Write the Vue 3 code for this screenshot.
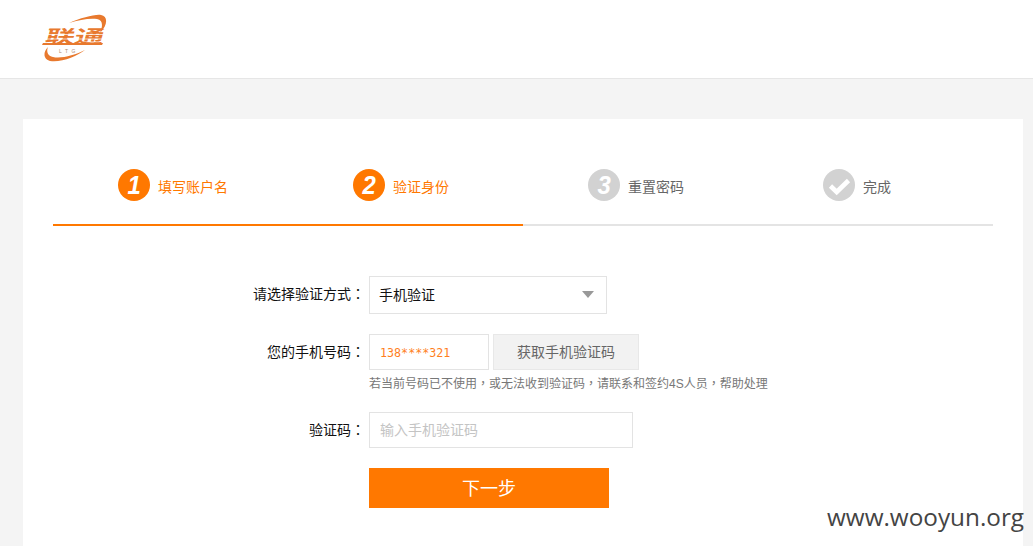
<script setup>
const steps = [
  { num: '1', label: '填写账户名', active: true },
  { num: '2', label: '验证身份', active: true },
  { num: '3', label: '重置密码', active: false },
  { num: '', label: '完成', active: false },
];
</script>

<template>
  <div class="page">
    <header class="top">
      <svg class="logo" width="66" height="50" viewBox="0 0 66 50">
        <path d="M28 9 C40 4 54 0 60 1 C67 2 67 11 59 19 C62 12 62 6 56 5 C48 4 38 6 28 9 Z" fill="#e8792e" />
        <path d="M7 33 C2 38 2 45 9 47 C20 49 36 42 44 36 C34 41 20 45 12 43 C7 42 5 38 7 33 Z" fill="#e8792e" />
        <text class="logo-cn" transform="translate(3 29) scale(1.62 1) skewX(-10)">联通</text>
        <path d="M4 20.5 H64 M2 25 H62" stroke="#fff" stroke-width="0.7" />
        <path d="M2 29 H62 L61 31 H1 Z" fill="#e8792e" />
        <text x="18" y="39" class="logo-en">LTG</text>
      </svg>
    </header>

    <main class="card">
      <div class="steps">
        <div v-for="(s, i) in steps" :key="i" class="step" :class="{ on: s.active }">
          <span class="circle">
            <i v-if="s.num">{{ s.num }}</i>
            <svg v-else width="32" height="32" viewBox="0 0 32 32">
              <path d="M7.5 17 L13.7 23 L25.5 11.5" fill="none" stroke="#fff" stroke-width="4.6" />
            </svg>
          </span>
          <span class="step-label">{{ s.label }}</span>
        </div>
      </div>

      <form class="form" @submit.prevent>
        <div class="row row-select">
          <label>请选择验证方式：</label>
          <div class="select">
            <span>手机验证</span>
            <b class="arrow"></b>
          </div>
        </div>

        <div class="row row-phone">
          <label>您的手机号码：</label>
          <div class="phone">138****321</div>
          <div class="get-code">获取手机验证码</div>
        </div>
        <p class="hint">若当前号码已不使用，或无法收到验证码，请联系和签约4S人员，帮助处理</p>

        <div class="row row-code">
          <label>验证码：</label>
          <input class="code" type="text" placeholder="输入手机验证码" />
        </div>

        <button class="next" type="button">下一步</button>
      </form>
    </main>

    <div class="mark">www.wooyun.org</div>
  </div>
</template>

<style>
html, body {
  margin: 0;
  background: #f4f4f4;
}
</style>

<style scoped>
.page {
  position: relative;
  height: 546px;
  overflow: hidden;
  background: #f4f4f4;
  font-family: "Liberation Sans", "Noto Sans CJK SC", sans-serif;
  color: #333;
}

.top {
  height: 64px;
  background: #fff;
  border-bottom: 1px solid #e6e6e6;
  padding: 14px 0 0 41px;
}

.logo {
  display: block;
}

.logo-cn {
  font-family: "Noto Sans CJK SC", sans-serif;
  font-size: 18px;
  font-weight: 700;
  fill: #e8792e;
}

.logo-en {
  font-family: "Liberation Sans", sans-serif;
  font-size: 5px;
  letter-spacing: 3.5px;
  fill: #b08a70;
}

.card {
  margin: 40px 10px 0 23px;
  height: 427px;
  background: #fff;
  padding: 0 30px;
}

.steps {
  display: flex;
  height: 107px;
  box-sizing: border-box;
  padding-top: 50px;
  border-bottom: 2px solid #e4e4e4;
  position: relative;
}

.steps::after {
  content: "";
  position: absolute;
  left: 0;
  bottom: -2px;
  width: 470px;
  height: 2px;
  background: #ff7800;
}

.step {
  width: 235px;
  padding-left: 65px;
  box-sizing: border-box;
  display: flex;
  align-items: flex-start;
  gap: 8px;
  color: #666;
  font-size: 14px;
}

.step.on {
  color: #ff7800;
}

.circle {
  width: 32px;
  height: 32px;
  border-radius: 50%;
  background: #d2d2d2;
  color: #fff;
  display: flex;
  align-items: center;
  justify-content: center;
  font-size: 26px;
  font-weight: 700;
  flex: none;
}

.on .circle {
  background: #ff7800;
}

.circle i {
  font-style: italic;
  transform: scaleX(0.92);
}

.circle svg {
  display: block;
}

.step-label {
  line-height: 36px;
}

.form {
  padding-top: 50px;
  font-size: 14px;
}

.row {
  display: flex;
  align-items: center;
}

.row label {
  width: 312px;
  margin-right: 4px;
  padding-bottom: 2px;
  text-align: right;
  color: #111;
  flex: none;
  font-family: "Liberation Sans", "Noto Sans CJK TC", sans-serif;
}

.row-select label {
  padding-bottom: 4px;
}

.select {
  width: 238px;
  height: 38px;
  box-sizing: border-box;
  border: 1px solid #e3e3e3;
  display: flex;
  align-items: center;
  justify-content: space-between;
  padding: 0 12px 2px 9px;
  color: #111;
}

.arrow {
  width: 0;
  height: 0;
  border-left: 6px solid transparent;
  border-right: 6px solid transparent;
  border-top: 7px solid #999;
}

.row-phone {
  margin-top: 20px;
}

.phone {
  width: 120px;
  height: 36px;
  line-height: 36px;
  box-sizing: border-box;
  border: 1px solid #e3e3e3;
  padding-left: 10px;
  color: #ff7f1e;
  font-family: "DejaVu Sans Mono", monospace;
  font-size: 11.7px;
}

.get-code {
  width: 146px;
  height: 36px;
  line-height: 34px;
  margin-left: 4px;
  box-sizing: border-box;
  border: 1px solid #e8e8e8;
  background: #f2f2f2;
  text-align: center;
  color: #666;
}

.hint {
  margin: 6px 0 0 316px;
  font-family: "Liberation Sans", "Noto Sans CJK TC", sans-serif;
  font-size: 12px;
  line-height: 16px;
  color: #777;
}

.row-code {
  margin-top: 20px;
}

.code {
  width: 264px;
  height: 36px;
  box-sizing: border-box;
  border: 1px solid #e3e3e3;
  outline: none;
  padding: 0 10px;
  font: inherit;
  color: #333;
}

.code::placeholder {
  color: #c4c4c4;
}

.next {
  display: block;
  margin: 20px 0 0 316px;
  width: 240px;
  height: 40px;
  border: none;
  background: #ff7800;
  color: #fff;
  font: inherit;
  font-size: 18px;
  padding: 0 0 2px;
}

.mark {
  position: absolute;
  left: 827px;
  top: 502px;
  font-family: "Open Sans", sans-serif;
  font-size: 24.3px;
  line-height: 30px;
  color: #444;
  white-space: nowrap;
}
</style>
